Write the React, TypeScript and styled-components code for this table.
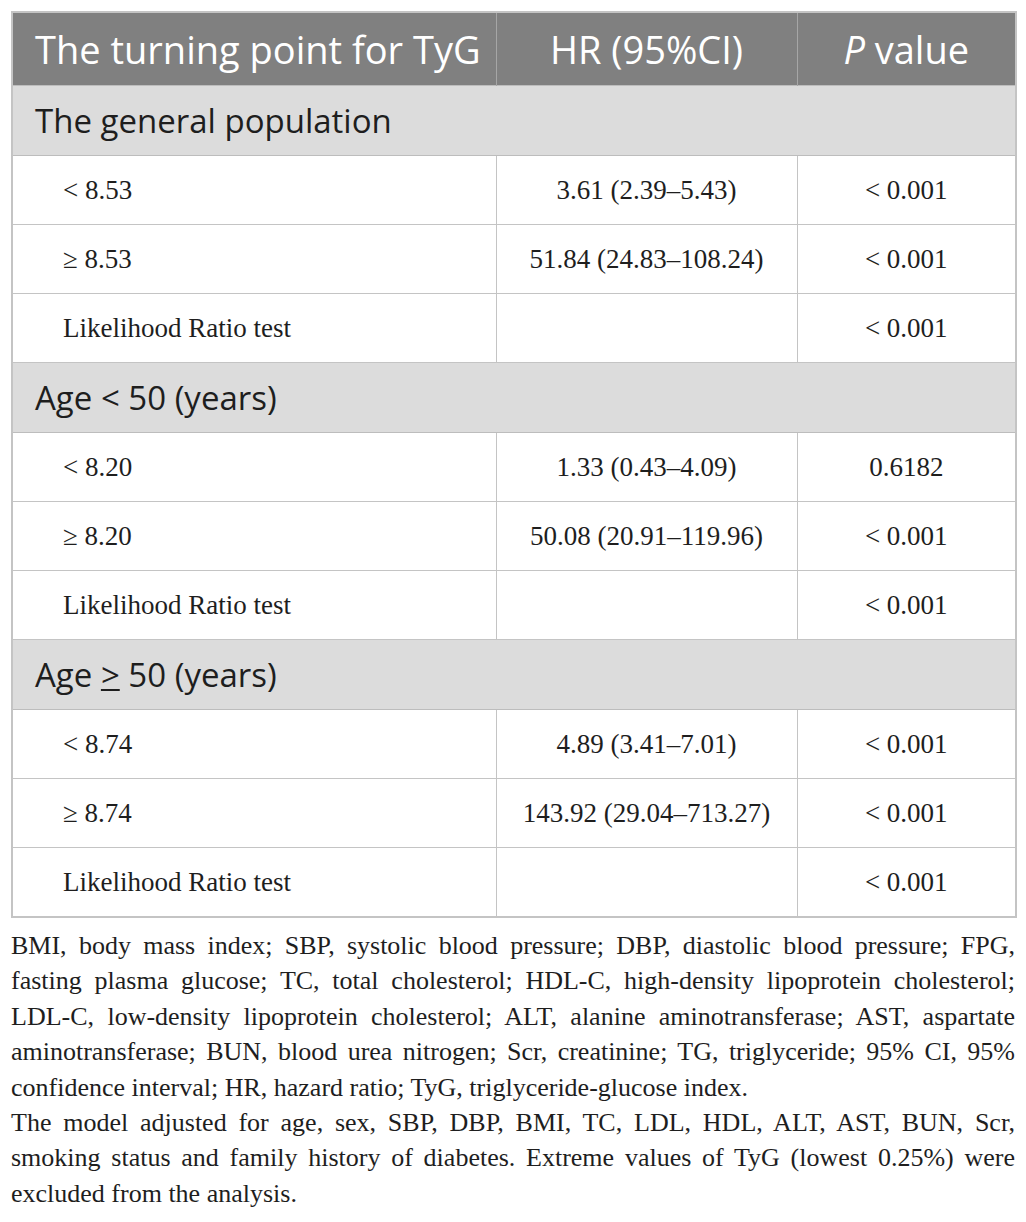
import styled, { createGlobalStyle } from 'styled-components';

const GlobalStyle = createGlobalStyle`
  html, body {
    margin: 0;
    padding: 0;
    background: #ffffff;
  }
`;

const Page = styled.div`
  padding: 11px 11px 0 11px;
  width: 1004px;
`;

const Table = styled.table`
  width: 1004px;
  border-collapse: collapse;
  border: 2px solid #c4c4c4;
  table-layout: fixed;
`;

const HeadCell = styled.th<{ $align?: 'left' | 'center' }>`
  background: #808080;
  color: #ffffff;
  font-family: 'Open Sans', 'Noto Sans', sans-serif;
  font-weight: 400;
  font-size: 38px;
  height: 72px;
  padding: 0 0 0 ${(p) => (p.$align === 'left' ? '22px' : '0')};
  text-align: ${(p) => p.$align ?? 'center'};
  border-left: 1px solid #a6a6a6;
  white-space: nowrap;

  em {
    font-style: italic;
  }
`;

const SectionCell = styled.td`
  background: #dcdcdc;
  color: #1e1e1e;
  font-family: 'Open Sans', 'Noto Sans', sans-serif;
  font-size: 33px;
  height: 69px;
  padding: 0 0 0 22px;
  border-top: 1px solid #bdbdbd;
  border-bottom: 1px solid #bdbdbd;
`;

const Underlined = styled.span`
  text-decoration: underline;
  text-underline-offset: 2px;
  text-decoration-thickness: 2px;
`;

const DataCell = styled.td<{ $indent?: boolean }>`
  font-family: 'Liberation Serif', 'Times New Roman', serif;
  font-size: 27px;
  color: #1e1e1e;
  height: 68px;
  padding: 0 0 0 ${(p) => (p.$indent ? '50px' : '0')};
  text-align: ${(p) => (p.$indent ? 'left' : 'center')};
  border: 1px solid #c4c4c4;
  white-space: nowrap;
`;

const Notes = styled.div`
  margin-top: 10px;
  font-family: 'Liberation Serif', 'Times New Roman', serif;
  font-size: 26px;
  line-height: 35.4px;
  color: #1e1e1e;
  text-align: justify;
`;

const Note = styled.p`
  margin: 0;
`;

type Row = { cut: string; hr: string; p: string };
type Group = { title: React.ReactNode; rows: Row[] };

const groups: Group[] = [
  {
    title: 'The general population',
    rows: [
      { cut: '< 8.53', hr: '3.61 (2.39–5.43)', p: '< 0.001' },
      { cut: '≥ 8.53', hr: '51.84 (24.83–108.24)', p: '< 0.001' },
      { cut: 'Likelihood Ratio test', hr: '', p: '< 0.001' },
    ],
  },
  {
    title: 'Age < 50 (years)',
    rows: [
      { cut: '< 8.20', hr: '1.33 (0.43–4.09)', p: '0.6182' },
      { cut: '≥ 8.20', hr: '50.08 (20.91–119.96)', p: '< 0.001' },
      { cut: 'Likelihood Ratio test', hr: '', p: '< 0.001' },
    ],
  },
  {
    title: (
      <>
        Age <Underlined>&gt;</Underlined> 50 (years)
      </>
    ),
    rows: [
      { cut: '< 8.74', hr: '4.89 (3.41–7.01)', p: '< 0.001' },
      { cut: '≥ 8.74', hr: '143.92 (29.04–713.27)', p: '< 0.001' },
      { cut: 'Likelihood Ratio test', hr: '', p: '< 0.001' },
    ],
  },
];

export default function App() {
  return (
    <Page>
      <GlobalStyle />
      <Table>
        <colgroup>
          <col style={{ width: 484 }} />
          <col style={{ width: 301 }} />
          <col style={{ width: 219 }} />
        </colgroup>
        <thead>
          <tr>
            <HeadCell $align="left">The turning point for TyG</HeadCell>
            <HeadCell>HR (95%CI)</HeadCell>
            <HeadCell>
              <em>P</em> value
            </HeadCell>
          </tr>
        </thead>
        <tbody>
          {groups.map((g, gi) => (
            <>
              <tr key={`s${gi}`}>
                <SectionCell colSpan={3}>{g.title}</SectionCell>
              </tr>
              {g.rows.map((r, ri) => (
                <tr key={`r${gi}-${ri}`}>
                  <DataCell $indent>{r.cut}</DataCell>
                  <DataCell>{r.hr}</DataCell>
                  <DataCell>{r.p}</DataCell>
                </tr>
              ))}
            </>
          ))}
        </tbody>
      </Table>
      <Notes>
        <Note>
          BMI, body mass index; SBP, systolic blood pressure; DBP, diastolic blood pressure; FPG, fasting
          plasma glucose; TC, total cholesterol; HDL-C, high-density lipoprotein cholesterol; LDL-C,
          low-density lipoprotein cholesterol; ALT, alanine aminotransferase; AST, aspartate
          aminotransferase; BUN, blood urea nitrogen; Scr, creatinine; TG, triglyceride; 95% CI, 95%
          confidence interval; HR, hazard ratio; TyG, triglyceride-glucose index.
        </Note>
        <Note>
          The model adjusted for age, sex, SBP, DBP, BMI, TC, LDL, HDL, ALT, AST, BUN, Scr, smoking
          status and family history of diabetes. Extreme values of TyG (lowest 0.25%) were excluded
          from the analysis.
        </Note>
      </Notes>
    </Page>
  );
}
